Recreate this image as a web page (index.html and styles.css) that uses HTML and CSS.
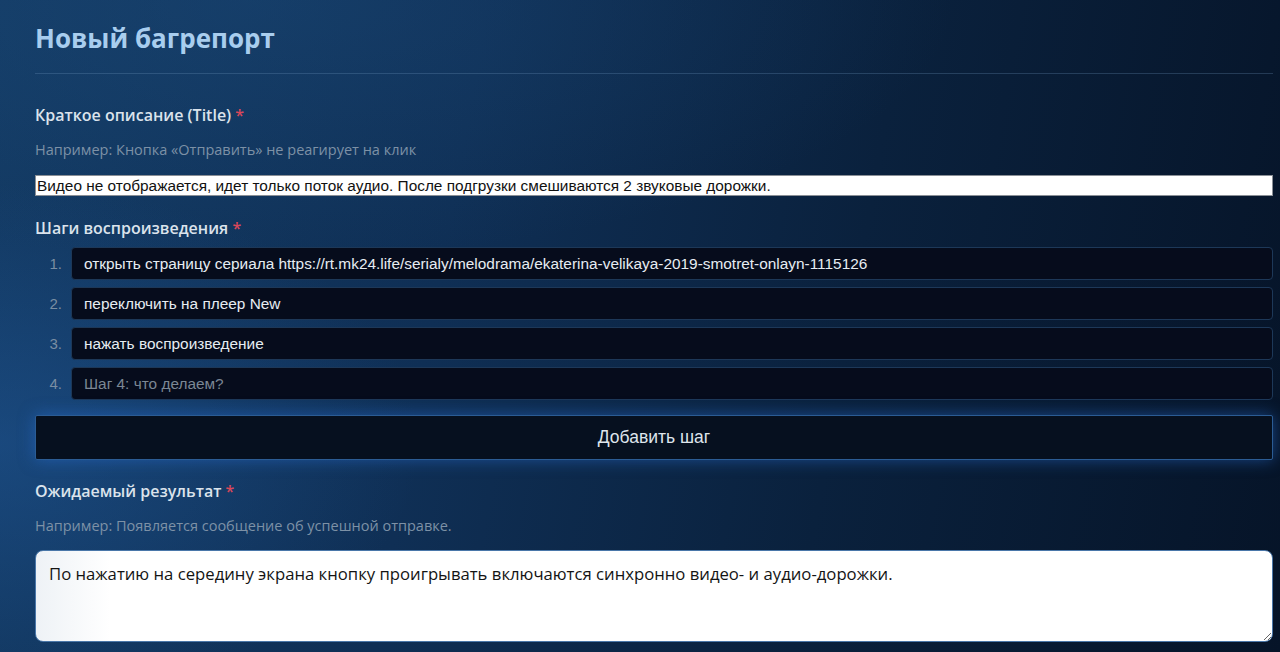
FILE: index.html
```html
<!DOCTYPE html>
<html lang="ru">
<head>
  <meta charset="UTF-8">
  <meta name="viewport" content="width=device-width, initial-scale=1.0">
  <title>Новый багрепорт</title>
  <link rel="stylesheet" href="styles.css">
</head>
<body>

  <div class="page">
    <div class="entete">
      <h1>Новый багрепорт</h1>
    </div>

    <div class="champ champ-titre">
      <label class="libelle" for="titre">Краткое описание (Title) <span class="requis">*</span></label>
      <div class="aide">Например: Кнопка «Отправить» не реагирует на клик</div>
      <input class="input-titre" id="titre" type="text" value="Видео не отображается, идет только поток аудио. После подгрузки смешиваются 2 звуковые дорожки.">
    </div>

    <div class="champ champ-etapes">
      <label class="libelle">Шаги воспроизведения <span class="requis">*</span></label>
      <ol class="etapes">
        <li class="etape">
          <span class="etape-num">1.</span>
          <input class="etape-input" type="text" value="открыть страницу сериала https://rt.mk24.life/serialy/melodrama/ekaterina-velikaya-2019-smotret-onlayn-1115126">
        </li>
        <li class="etape">
          <span class="etape-num">2.</span>
          <input class="etape-input" type="text" value="переключить на плеер New">
        </li>
        <li class="etape">
          <span class="etape-num">3.</span>
          <input class="etape-input" type="text" value="нажать воспроизведение">
        </li>
        <li class="etape">
          <span class="etape-num">4.</span>
          <input class="etape-input" type="text" placeholder="Шаг 4: что делаем?">
        </li>
      </ol>
      <button class="btn-ajouter" type="button">Добавить шаг</button>
    </div>

    <div class="champ champ-resultat">
      <label class="libelle" for="resultat">Ожидаемый результат <span class="requis">*</span></label>
      <div class="aide">Например: Появляется сообщение об успешной отправке.</div>
      <textarea class="zone-texte" id="resultat">По нажатию на середину экрана кнопку проигрывать включаются синхронно видео- и аудио-дорожки.</textarea>
    </div>
  </div>

</body>
</html>
```

FILE: styles.css
```css
html, body {
  height: 100%;
}

body {
  margin: 0;
  overflow: hidden;
  font-family: "Open Sans", "Noto Sans", sans-serif;
  color: #d9e2ec;
  background:
    radial-gradient(ellipse 420px 260px at 0% 68%, rgba(34, 92, 160, 0.45), transparent),
    radial-gradient(ellipse 700px 260px at 20% 0%, rgba(30, 80, 130, 0.35), transparent),
    linear-gradient(100deg, #133a63 0%, #0f2f55 35%, #0a213d 65%, #061428 100%);
}

.page {
  padding: 14px 7px 0 35px;
}

.entete {
  padding-bottom: 11px;
  border-bottom: 1px solid rgba(110, 150, 190, 0.28);
}

h1 {
  margin: 0;
  font-size: 26px;
  line-height: 48px;
  font-weight: 700;
  color: #a8cdee;
}

.champ {
  display: flex;
  flex-direction: column;
}

.champ-titre {
  margin-top: 29px;
}

.champ-etapes {
  margin-top: 20px;
}

.champ-resultat {
  margin-top: 19px;
}

.libelle {
  font-size: 16px;
  line-height: 24px;
  font-weight: 600;
  color: #dbe3ec;
}

.requis {
  color: #d9475a;
}

.aide {
  margin-top: 13px;
  font-size: 14.5px;
  line-height: 20px;
  color: #7d91a6;
}

.input-titre {
  margin-top: 15px;
  height: 21px;
  box-sizing: border-box;
  padding: 0 1px;
  border: 1px solid #8a8f96;
  background: #fff;
  font-family: "Liberation Sans", Arial, sans-serif;
  font-size: 15.4px;
  color: #111;
}

.etapes {
  list-style: none;
  margin: 7px 0 0;
  padding: 0;
  display: flex;
  flex-direction: column;
  gap: 7px;
}

.etape {
  display: flex;
  align-items: center;
  gap: 9px;
}

.etape-num {
  width: 27px;
  text-align: right;
  font-family: "Liberation Sans", Arial, sans-serif;
  font-size: 15px;
  color: #7a8ea3;
}

.etape-input {
  flex: 1;
  height: 33px;
  box-sizing: border-box;
  padding: 0 12px;
  border: 1px solid #1d3858;
  border-radius: 4px;
  background: #060c1c;
  font-family: "Liberation Sans", Arial, sans-serif;
  font-size: 15.4px;
  color: #e6ecf2;
}

.etape-input::placeholder {
  color: #7b8794;
}

.btn-ajouter {
  margin-top: 15px;
  height: 45px;
  border: 1px solid #2b5c94;
  border-radius: 2px;
  background: #06101f;
  box-shadow: 0 0 16px rgba(40, 110, 210, 0.55);
  font-family: "Liberation Sans", Arial, sans-serif;
  font-size: 17.5px;
  color: #dfe5ec;
  cursor: pointer;
}

.zone-texte {
  margin-top: 14px;
  height: 92px;
  box-sizing: border-box;
  padding: 12px 13px;
  border: 1px solid #4a77a9;
  border-radius: 8px;
  background: linear-gradient(90deg, #eef2f6 0%, #ffffff 6%, #ffffff 100%);
  font-family: "Open Sans", "Noto Sans", sans-serif;
  font-size: 16.7px;
  line-height: 22px;
  color: #141414;
  resize: vertical;
}
```
